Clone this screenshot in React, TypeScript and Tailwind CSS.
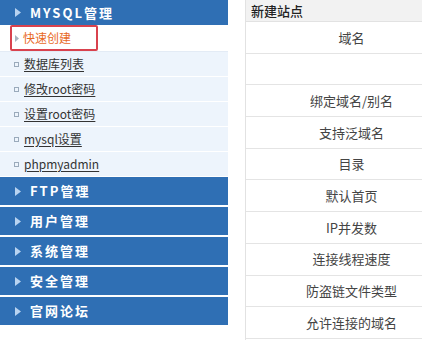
const font = { fontFamily: '"Microsoft YaHei", "Noto Sans CJK SC", "Noto Sans", sans-serif' };

const subItems = ['数据库列表', '修改root密码', '设置root密码', 'mysql设置', 'phpmyadmin'];
const groups = ['FTP管理', '用户管理', '系统管理', '安全管理', '官网论坛'];
const fields = ['域名', '', '绑定域名/别名', '支持泛域名', '目录', '默认首页', 'IP并发数', '连接线程速度', '防盗链文件类型', '允许连接的域名'];

const Arrow = () => (
  <svg width="6" height="9" viewBox="0 0 6 9" className="shrink-0">
    <path d="M0 0 L6 4.5 L0 9 Z" fill="#b8d3f1" />
  </svg>
);

const GroupHead = ({ title }: { title: string }) => (
  <div className="flex h-[28px] items-center bg-[#2f6fb4] pl-[15px]">
    <Arrow />
    <span className="ml-[9px] text-[13px] font-bold tracking-[2px] text-white">{title}</span>
  </div>
);

export default function App() {
  return (
    <div className="flex h-[340px] w-[422px] overflow-hidden bg-white" style={font}>
      <div className="w-[228px] shrink-0">
        <div className="flex h-[25px] items-center bg-[#2f6fb4] pl-[15px]">
          <Arrow />
          <span className="ml-[9px] text-[13px] font-bold tracking-[2px] text-white">MYSQL管理</span>
        </div>
        <div className="flex h-[27px] items-center border-b border-[#e3ebf5] bg-white pl-[10px]">
          <div className="flex h-[26px] w-[88px] items-center rounded-[2px] border-2 border-[#d9424e] pl-[3px]">
            <svg width="4" height="7" viewBox="0 0 4 7">
              <path d="M0 0 L4 3.5 L0 7 Z" fill="#a9b3bf" />
            </svg>
            <span className="ml-[4px] text-[12px] text-[#e8691f]">快速创建</span>
          </div>
        </div>
        {subItems.map((s) => (
          <div key={s} className="flex h-[25px] items-center border-b border-white bg-[#edf4fc] pl-[14px]">
            <span className="h-[5px] w-[5px] border border-[#9aaabb]" />
            <span className="ml-[5px] text-[12px] text-[#333] underline underline-offset-2">{s}</span>
          </div>
        ))}
        <div className="flex flex-col gap-[2px]">
          {groups.map((g) => (
            <GroupHead key={g} title={g} />
          ))}
        </div>
      </div>
      <div className="w-[17px] shrink-0" />
      <div className="w-[212px] shrink-0 border-l border-[#e2e2e2]">
        <div className="flex h-[22px] items-center border-b border-[#e2e2e2] bg-[#f2f2f2] pl-[5px] text-[13px] font-medium text-[#222]">
          新建站点
        </div>
        {fields.map((f, i) => (
          <div key={i} className="flex h-[31.7px] items-center justify-center border-b border-[#e4e4e4] text-[13px] text-[#444]">
            {f}
          </div>
        ))}
      </div>
    </div>
  );
}
